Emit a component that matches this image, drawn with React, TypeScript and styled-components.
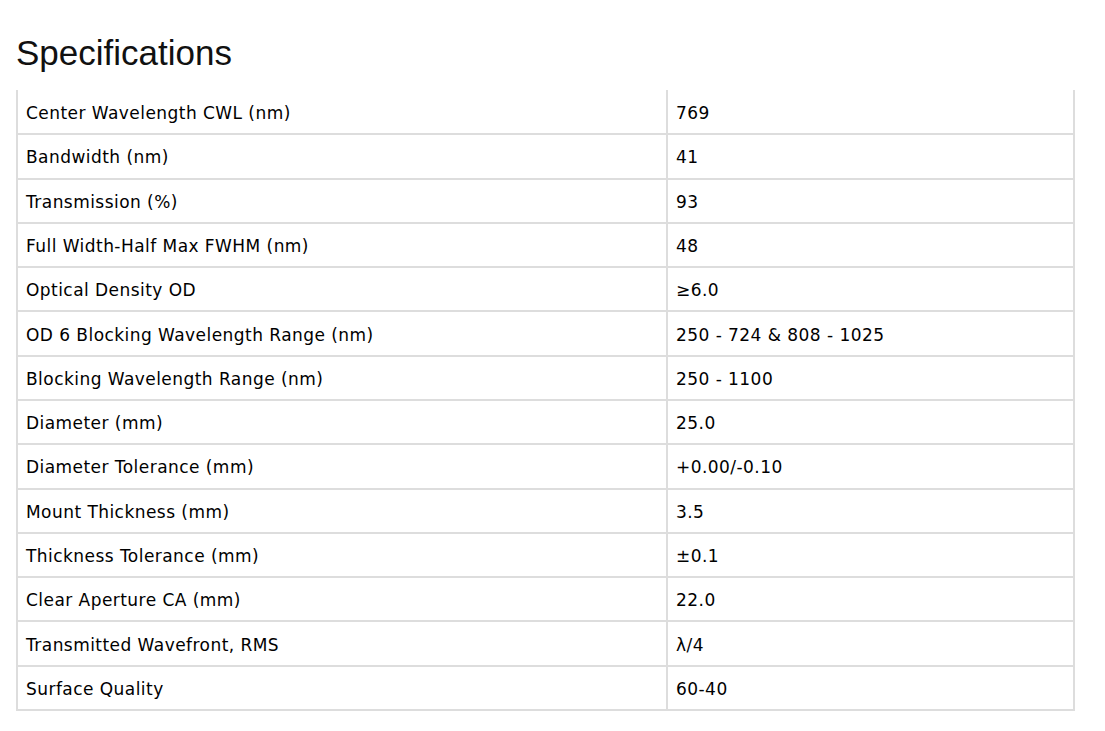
import React from "react";
import styled, { createGlobalStyle } from "styled-components";

const Global = createGlobalStyle`
  html, body { margin: 0; padding: 0; background: #fff; }
  body { font-family: "DejaVu Sans", Verdana, sans-serif; color: #000; }
`;

const Page = styled.div`
  padding: 33px 0 0 16px;
`;

const Title = styled.h2`
  margin: 0 0 17px 0;
  font-family: "Liberation Sans", Arial, sans-serif;
  font-weight: 400;
  font-size: 35px;
  line-height: 40px;
  color: #111;
`;

const Table = styled.table`
  width: 1059px;
  border-collapse: collapse;
  table-layout: fixed;
  border-left: 2px solid #ddd;
  border-right: 2px solid #ddd;
`;

const Row = styled.tr`
  height: 44.29px;
  border-bottom: 2px solid #ddd;
`;

const Cell = styled.td<{ $label?: boolean }>`
  padding: 2px 8px 0 8px;
  font-size: 17px;
  line-height: 20px;
  letter-spacing: 0.45px;
  color: #000;
  vertical-align: middle;
  width: ${(p) => (p.$label ? "632px" : "auto")};
  border-right: ${(p) => (p.$label ? "2px solid #ddd" : "none")};
`;

const specs: [string, string][] = [
  ["Center Wavelength CWL (nm)", "769"],
  ["Bandwidth (nm)", "41"],
  ["Transmission (%)", "93"],
  ["Full Width-Half Max FWHM (nm)", "48"],
  ["Optical Density OD", "≥6.0"],
  ["OD 6 Blocking Wavelength Range (nm)", "250 - 724 & 808 - 1025"],
  ["Blocking Wavelength Range (nm)", "250 - 1100"],
  ["Diameter (mm)", "25.0"],
  ["Diameter Tolerance (mm)", "+0.00/-0.10"],
  ["Mount Thickness (mm)", "3.5"],
  ["Thickness Tolerance (mm)", "±0.1"],
  ["Clear Aperture CA (mm)", "22.0"],
  ["Transmitted Wavefront, RMS", "λ/4"],
  ["Surface Quality", "60-40"],
];

export default function App() {
  return (
    <>
      <Global />
      <Page>
        <Title>Specifications</Title>
        <Table>
          <tbody>
            {specs.map(([k, v]) => (
              <Row key={k}>
                <Cell $label>{k}</Cell>
                <Cell>{v}</Cell>
              </Row>
            ))}
          </tbody>
        </Table>
      </Page>
    </>
  );
}
